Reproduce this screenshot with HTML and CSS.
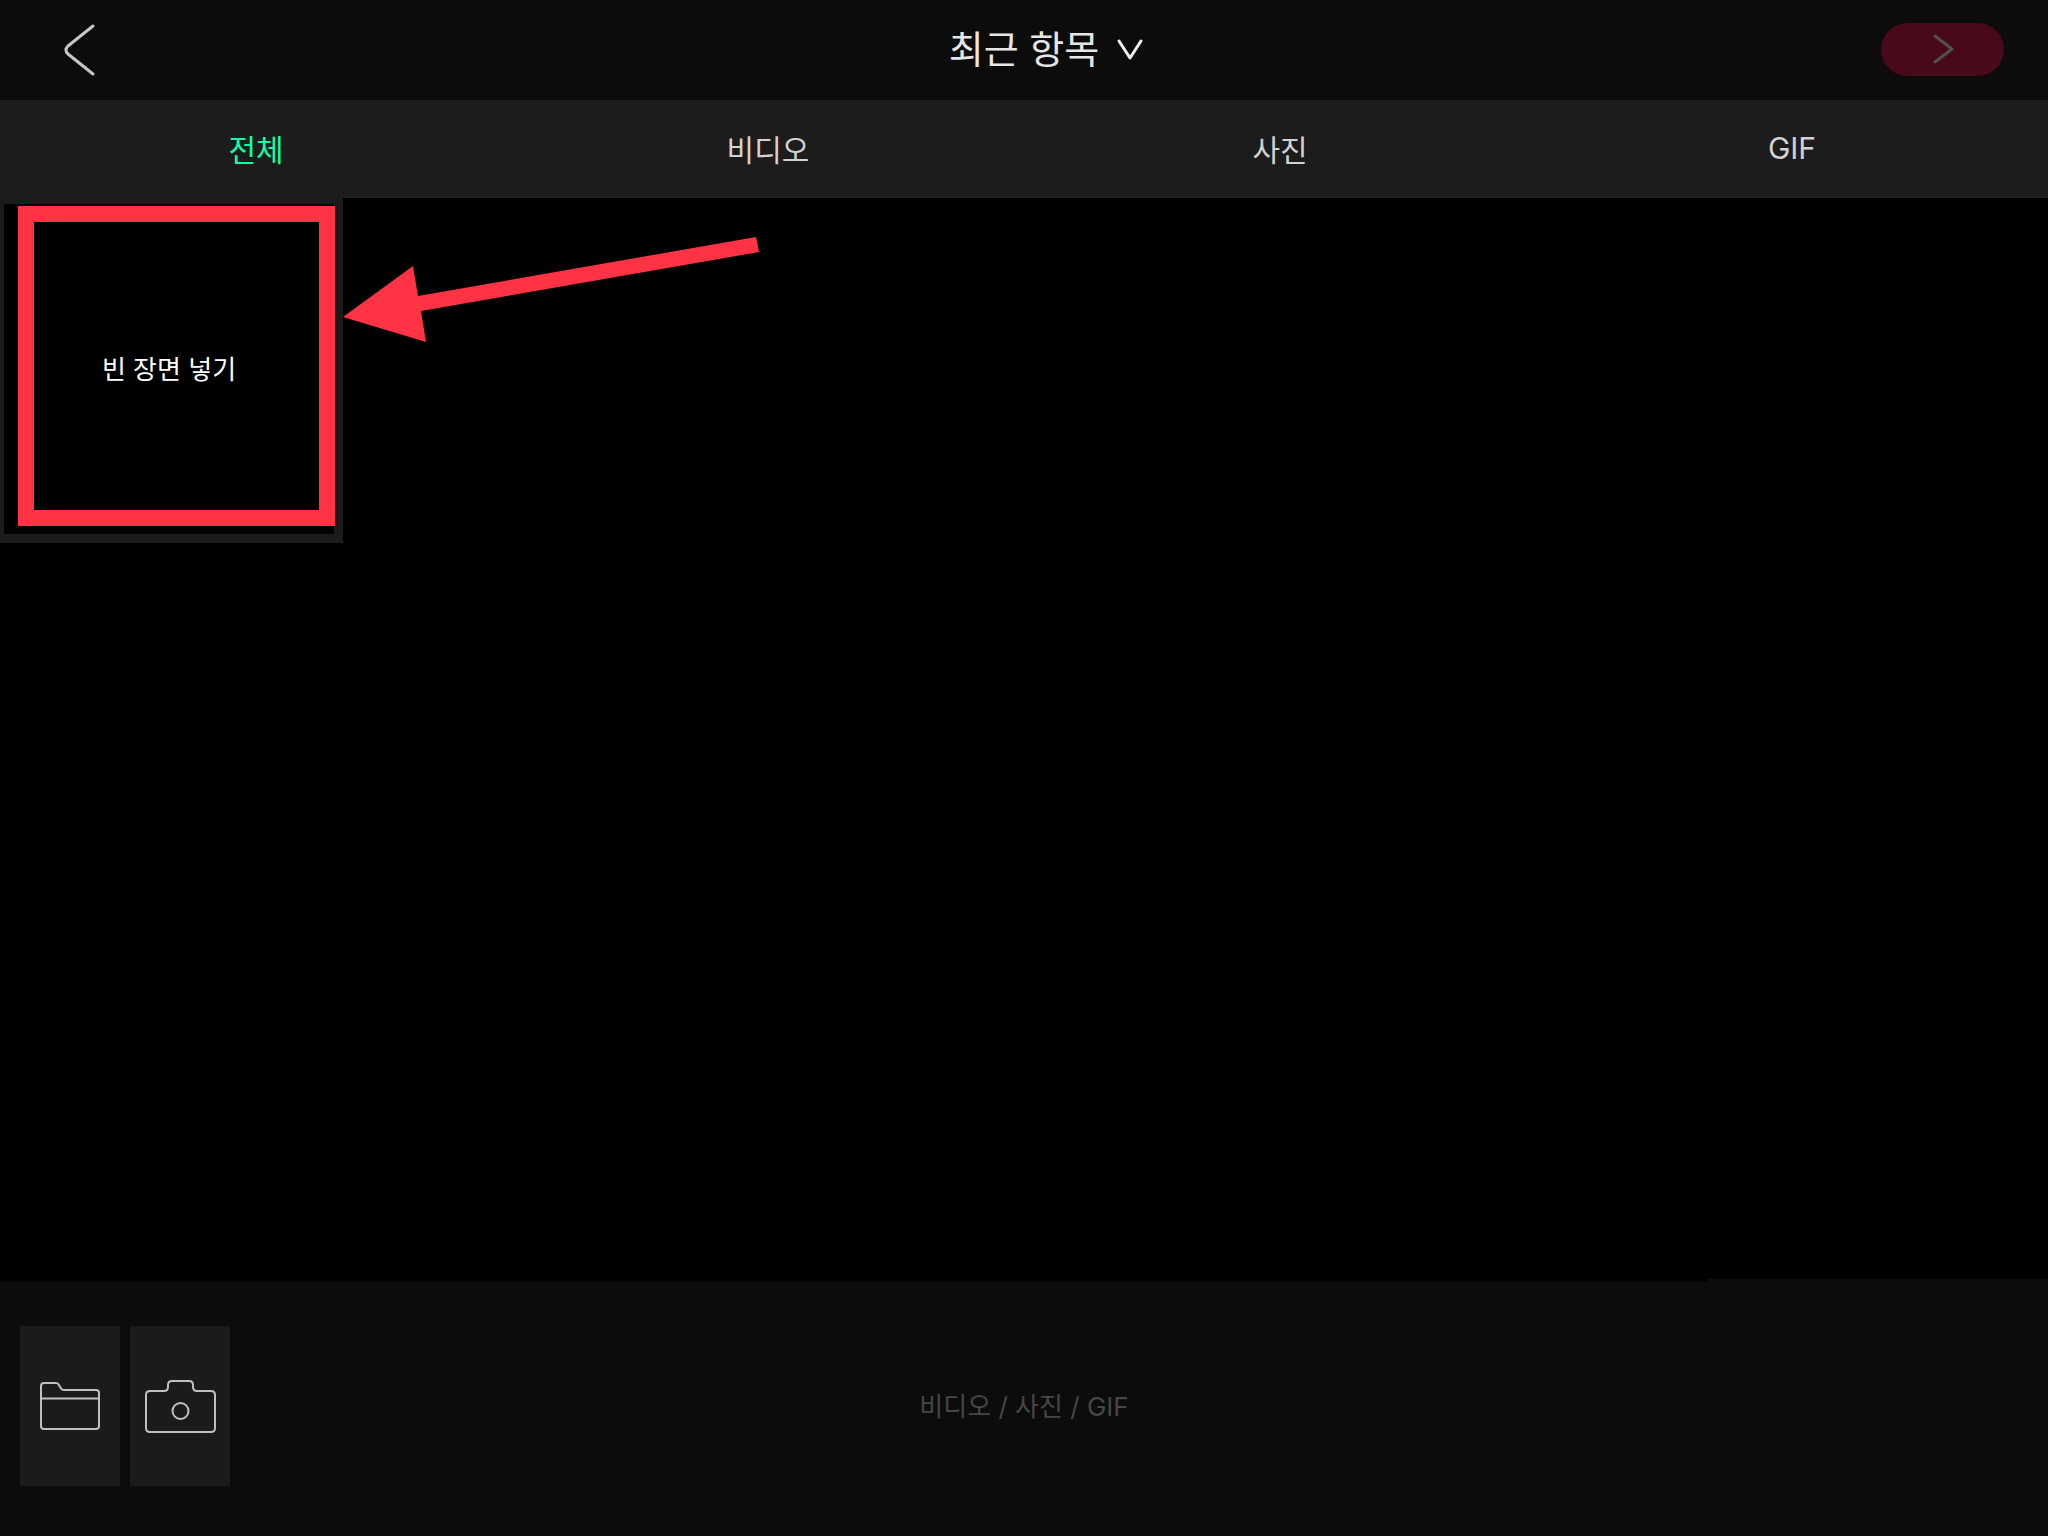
FILE: index.html
```html
<!DOCTYPE html>
<html lang="ko">

<head>
  <meta charset="UTF-8">
  <meta name="viewport" content="width=device-width, initial-scale=1">
  <title>최근 항목</title>
  <link rel="stylesheet" href="styles.css">
</head>

<body>

  <header class="topbar">
    <button class="back" type="button" aria-label="뒤로">
      <svg width="32" height="50" viewBox="0 0 32 50">
        <path d="M29 2 L4 22 Q0 26 4 30 L29 50" />
      </svg>
    </button>
    <button class="album" type="button">
      <span>최근 항목</span>
      <svg width="26" height="20" viewBox="0 0 26 20">
        <path d="M2 2 L13 19 L24 2" />
      </svg>
    </button>
    <button class="next" type="button" aria-label="다음" disabled>
      <svg width="20" height="28" viewBox="0 0 20 28">
        <path d="M2 1 L19 14 L2 27" />
      </svg>
    </button>
  </header>

  <nav class="tabs">
    <a class="tab active" href="#all">전체</a>
    <a class="tab" href="#video">비디오</a>
    <a class="tab" href="#photo">사진</a>
    <a class="tab" href="#gif">GIF</a>
  </nav>

  <main class="gallery">
    <div class="cell">
      <button class="tile" type="button">빈 장면 넣기</button>
      <div class="marker"></div>
      <svg class="arrow" width="416" height="106" viewBox="0 0 416 106">
        <polygon points="0,80 70,29 75,59 413,0 416,15 78,74 83,105" />
      </svg>
    </div>
  </main>

  <footer class="dock">
    <div class="sources">
      <button class="source" type="button" aria-label="폴더">
        <svg width="60" height="50" viewBox="0 0 60 50">
          <path d="M1 5 Q1 2 4 2 H16 Q18 2 19 4 L21 7.5 Q22 9 24 9 H56 Q59 9 59 12 V45 Q59 48 56 48 H4 Q1 48 1 45 Z M1 17.5 H59" />
        </svg>
      </button>
      <button class="source" type="button" aria-label="카메라">
        <svg width="72" height="56" viewBox="0 0 72 56">
          <path d="M2 17 Q2 13 6 13 H20 Q24 13 24 9 V7 Q24 3 28 3 H45 Q49 3 49 7 V9 Q49 13 53 13 H67 Q71 13 71 17 V50 Q71 54 67 54 H6 Q2 54 2 50 Z" />
          <circle cx="36.5" cy="33" r="8" />
        </svg>
      </button>
    </div>
    <p class="hint">비디오 / 사진 / GIF</p>
  </footer>

</body>

</html>
```

FILE: styles.css
```css
* {
  box-sizing: border-box;
}

body {
  margin: 0;
  min-height: 100vh;
  display: flex;
  flex-direction: column;
  background: #000;
  color: #e6e6e6;
  font-family: Inter, "Noto Sans CJK KR", sans-serif;
}

button {
  padding: 0;
  border: none;
  background: none;
  color: inherit;
  font: inherit;
  cursor: pointer;
}

svg {
  display: block;
  fill: none;
  stroke: #c0c0c0;
  stroke-width: 2;
  stroke-linecap: round;
  stroke-linejoin: round;
  overflow: visible;
}

/* Top bar */
.topbar {
  height: 100px;
  padding: 0 44px 2px;
  display: grid;
  grid-template-columns: 1fr auto 1fr;
  align-items: center;
  background: #0c0c0c;
}

.back {
  justify-self: start;
  padding: 0 20px;
}

.back svg {
  stroke: #c8c8c8;
  stroke-width: 3;
}

.album {
  display: flex;
  align-items: center;
  gap: 18px;
  font-size: 38px;
  line-height: 48px;
}

/* keeps the album name itself in the middle */
.album::before {
  content: "";
  width: 26px;
}

.album svg {
  stroke: #f0f0f0;
  stroke-width: 3;
}

.next {
  justify-self: end;
  width: 123px;
  height: 53px;
  display: flex;
  align-items: center;
  justify-content: center;
  border-radius: 27px;
  background: #480a1b;
}

.next svg {
  stroke: #505050;
  stroke-width: 3;
}

/* Tabs */
.tabs {
  height: 98px;
  display: grid;
  grid-template-columns: repeat(4, 1fr);
  background: #1c1c1c;
}

.tab {
  padding-bottom: 2px;
  display: flex;
  align-items: center;
  justify-content: center;
  color: #d2d2d2;
  font-size: 30px;
  text-decoration: none;
}

.tab.active {
  color: #0fffa8;
}

/* Gallery */
.gallery {
  flex: 1;
  display: flex;
  align-items: flex-start;
}

.cell {
  position: relative;
}

.tile {
  width: 343px;
  height: 345px;
  padding-bottom: 4px;
  border: solid #1b1b1b;
  border-width: 6px 9px 9px 4px;
  background: #000;
  color: #fff;
  font-size: 26px;
}

.marker {
  position: absolute;
  top: 8px;
  left: 18px;
  width: 317px;
  height: 320px;
  border: 16px solid #ff3344;
  pointer-events: none;
}

.arrow {
  position: absolute;
  top: 39px;
  left: 100%;
  fill: #ff3344;
  stroke: none;
}

/* Bottom dock */
.dock {
  position: relative;
  padding: 44px 20px 50px;
  display: grid;
  grid-template-columns: 1fr auto 1fr;
  align-items: center;
  background: #0c0c0c;
}

.dock::before {
  content: "";
  position: absolute;
  right: 0;
  bottom: 100%;
  width: 340px;
  height: 3px;
  background: #0c0c0c;
}

.sources {
  display: flex;
  gap: 10px;
}

.source {
  width: 100px;
  height: 160px;
  display: flex;
  align-items: center;
  justify-content: center;
  background: #1b1b1b;
}

.hint {
  margin: 0;
  padding-bottom: 4px;
  color: #464646;
  font-size: 26px;
}
```
